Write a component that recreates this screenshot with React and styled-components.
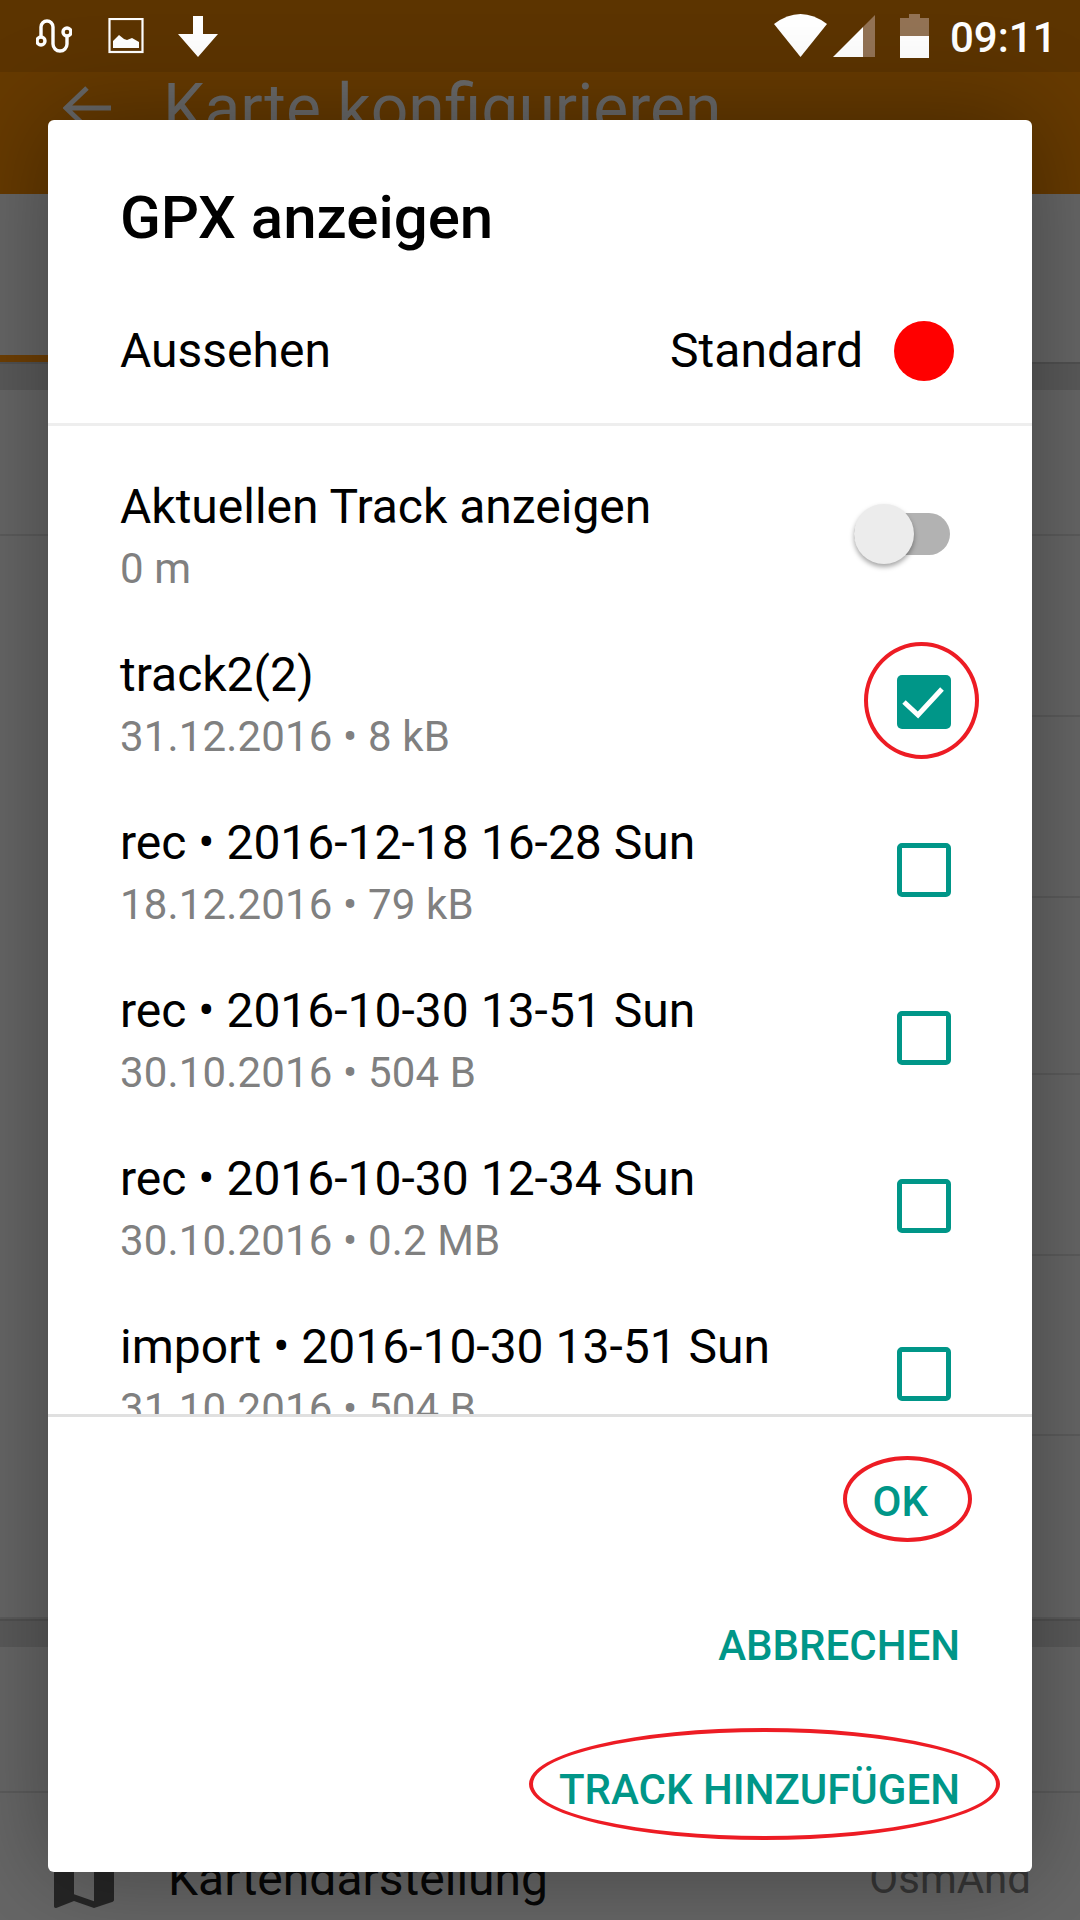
import React from "react";
import styled, { createGlobalStyle } from "styled-components";

const GlobalStyle = createGlobalStyle`
  html, body {
    margin: 0;
    padding: 0;
    background: #666;
    font-family: Roboto, "Liberation Sans", sans-serif;
  }
`;

const TEAL = "#009688";

const tracks = [
  { name: "track2(2)", meta: "31.12.2016 • 8 kB", checked: true },
  { name: "rec • 2016-12-18 16-28 Sun", meta: "18.12.2016 • 79 kB" },
  { name: "rec • 2016-10-30 13-51 Sun", meta: "30.10.2016 • 504 B" },
  { name: "rec • 2016-10-30 12-34 Sun", meta: "30.10.2016 • 0.2 MB" },
  { name: "import • 2016-10-30 13-51 Sun", meta: "31.10.2016 • 504 B" },
];

// heights of the rows behind the dialog, top to bottom
const backRows = [
  { height: 146, inset: 0 },
  { height: 181, inset: 160 },
  { height: 181, inset: 160 },
  { height: 177, inset: 160 },
  { height: 181, inset: 160 },
  { height: 180, inset: 160 },
  { height: 183, inset: 0 },
];

const App = () => {
  return (
    <Page>
      <GlobalStyle />
      <StatusBar>
        <StatusGroup>
          <svg width="36" height="36" viewBox="36 18 36 36" fill="none" stroke="#fff" strokeWidth="3.4">
            <path d="M41 37V27a6 6 0 0 1 12 0v17a7 7 0 0 0 14 0v-8" />
            <circle cx="41" cy="41" r="4" />
            <circle cx="67" cy="32" r="4" />
          </svg>
          <PictureIcon width="36" height="36" viewBox="108 18 36 36">
            <rect x="109.5" y="19" width="33" height="33" fill="none" stroke="#fff" strokeWidth="2.2" />
            <path d="M113 48v-7l6-6 5 4 3 1 5-2 7 4v6z" fill="#fff" />
          </PictureIcon>
          <ArrowIcon width="40" height="42" viewBox="178 16 40 42">
            <path d="M193 16h10v18h15l-20 23-20-23h15z" fill="#fff" />
          </ArrowIcon>
        </StatusGroup>
        <StatusGroup>
          <svg width="54" height="44" viewBox="773 14 54 44">
            <path d="M773 24q26.500-20 53 0l-26.500 33z" fill="#fff" />
          </svg>
          <SignalIcon width="42" height="43" viewBox="832 15 42 43">
            <path d="M862 27l12-12v42h-12z" fill="#937355" />
            <path d="M832 57l30-30v30z" fill="#fff" />
          </SignalIcon>
          <BatteryIcon width="29" height="44" viewBox="899 14 29 44">
            <path d="M899 18h9v-4h11v4h9v18h-29z" fill="#937355" />
            <rect x="899" y="36" width="29" height="22" fill="#fff" />
          </BatteryIcon>
          <Clock>09:11</Clock>
        </StatusGroup>
      </StatusBar>

      <AppBar>
        <svg width="48" height="44" viewBox="0 0 48 44" fill="none" stroke="#686868" strokeWidth="5">
          <path d="M2 22h46M24 2L3 22l21 20" />
        </svg>
        <AppBarTitle>Karte konfigurieren</AppBarTitle>
      </AppBar>

      <Backdrop>
        <TabStrip>
          <TabIndicator />
        </TabStrip>
        <SectionGap />
        {backRows.map((row, i) => (
          <BackRow key={i} $height={row.height} $inset={row.inset} />
        ))}
        <SectionGap />
        <BackRow $height={146} $inset={0} />
        <MapRow>
          <svg width="80" height="80" viewBox="0 0 24 24" fill="#262626">
            <path d="M20.5 3l-.16.03L15 5.100 9 3 3.360 4.900c-.21.07-.36.25-.36.48V20.500c0 .28.22.5.5.5l.16-.03L9 18.900l6 2.100 5.640-1.900c.21-.07.36-.25.36-.48V3.500c0-.28-.22-.5-.5-.5zM15 19l-6-2.110V5l6 2.110V19z" />
          </svg>
          <MapLabel>Kartendarstellung</MapLabel>
          <MapValue>OsmAnd</MapValue>
        </MapRow>
      </Backdrop>

      <Dialog>
        <DialogTitle>GPX anzeigen</DialogTitle>
        <AppearanceRow>
          <RowLabel>Aussehen</RowLabel>
          <AppearanceValue>
            <RowLabel>Standard</RowLabel>
            <ColorDot />
          </AppearanceValue>
        </AppearanceRow>
        <TrackList>
          <TrackRow>
            <TrackText>
              <RowLabel>Aktuellen Track anzeigen</RowLabel>
              <Meta>0 m</Meta>
            </TrackText>
            <Toggle>
              <ToggleThumb />
            </Toggle>
          </TrackRow>
          {tracks.map((track) => (
            <TrackRow key={track.name}>
              <TrackText>
                <RowLabel>{track.name}</RowLabel>
                <Meta>{track.meta}</Meta>
              </TrackText>
              <Checkbox $checked={track.checked}>
                {track.checked && (
                  <>
                    <svg width="54" height="54" viewBox="0 0 54 54" fill="none" stroke="#fff" strokeWidth="5">
                      <path d="M7 27l14 13 24-26" />
                    </svg>
                    <Mark $left={-33} $top={-33} $width={115} $height={117} />
                  </>
                )}
              </Checkbox>
            </TrackRow>
          ))}
        </TrackList>
        <Actions>
          <ActionButton $inset={32}>
            OK
            <Mark $left={-30} $top={-22} $width={129} $height={86} />
          </ActionButton>
          <ActionButton>ABBRECHEN</ActionButton>
          <ActionButton>
            TRACK HINZUFÜGEN
            <Mark $left={-30} $top={-38} $width={471} $height={112} />
          </ActionButton>
        </Actions>
      </Dialog>
    </Page>
  );
};

export default App;

const Page = styled.div`
  position: relative;
  width: 1080px;
  height: 1920px;
  overflow: hidden;
  display: flex;
  flex-direction: column;
  background: #666;
`;

const StatusBar = styled.div`
  height: 72px;
  flex: none;
  display: flex;
  justify-content: space-between;
  align-items: flex-start;
  padding: 0 20px 0 36px;
  background: #5c3400;
`;

const StatusGroup = styled.div`
  display: flex;
  align-items: flex-start;
  padding-top: 18px;

  svg {
    flex: none;
  }
  &:last-child {
    padding-top: 14px;
  }
`;

const PictureIcon = styled.svg`
  margin-left: 36px;
`;

const ArrowIcon = styled.svg`
  margin: -2px 0 0 34px;
`;

const SignalIcon = styled.svg`
  margin: 1px 0 0 5px;
`;

const BatteryIcon = styled.svg`
  margin-left: 25px;
`;

const Clock = styled.div`
  margin: 2px 0 0 21px;
  width: 110px;
  color: #fff;
  font-size: 42px;
  line-height: 44px;
  font-weight: 500;
`;

const AppBar = styled.div`
  height: 122px;
  flex: none;
  display: flex;
  align-items: flex-start;
  padding-left: 63px;
  background: #663a00;

  svg {
    margin-top: 14px;
  }
`;

const AppBarTitle = styled.div`
  margin: 0 0 0 52px;
  color: #6a6a6a;
  font-size: 66px;
  line-height: 74px;
  font-weight: 400;
  white-space: nowrap;
`;

const Backdrop = styled.div`
  flex: 1;
  display: flex;
  flex-direction: column;
`;

const TabStrip = styled.div`
  height: 168px;
  flex: none;
  display: flex;
  align-items: flex-end;
`;

const TabIndicator = styled.div`
  width: 360px;
  height: 7px;
  background: #6e3f04;
`;

const SectionGap = styled.div`
  height: 28px;
  flex: none;
  box-sizing: border-box;
  background: #5a5a5a;
  border-top: 2px solid #515151;
`;

const BackRow = styled.div`
  height: ${(p) => p.$height}px;
  flex: none;
  box-sizing: border-box;
  margin-left: ${(p) => p.$inset}px;
  border-bottom: 2px solid #5c5c5c;
`;

const MapRow = styled.div`
  height: 170px;
  flex: none;
  display: flex;
  align-items: center;
  padding: 0 49px 0 44px;
`;

const MapLabel = styled.div`
  margin-left: 44px;
  flex: 1;
  color: #060606;
  font-size: 48px;
`;

const MapValue = styled.div`
  color: #363636;
  font-size: 42px;
`;

const Dialog = styled.div`
  position: absolute;
  left: 48px;
  top: 120px;
  width: 984px;
  height: 1752px;
  display: flex;
  flex-direction: column;
  background: #fff;
  border-radius: 6px;
  box-shadow: 0 0 96px rgba(0, 0, 0, 0.35);
`;

const DialogTitle = styled.div`
  height: 156px;
  flex: none;
  box-sizing: border-box;
  padding: 62px 72px 0;
  color: #000;
  font-size: 60px;
  line-height: 72px;
  font-weight: 500;
`;

const AppearanceRow = styled.div`
  height: 150px;
  flex: none;
  box-sizing: border-box;
  display: flex;
  align-items: center;
  justify-content: space-between;
  padding: 3px 78px 0 72px;
  border-bottom: 3px solid #eeeeee;
`;

const AppearanceValue = styled.div`
  display: flex;
  align-items: center;
  gap: 31px;
`;

const RowLabel = styled.div`
  color: #000;
  font-size: 48px;
  line-height: 60px;
  white-space: nowrap;
`;

const ColorDot = styled.div`
  width: 60px;
  height: 60px;
  border-radius: 50%;
  background: #f00;
`;

const TrackList = styled.div`
  height: 988px;
  flex: none;
  box-sizing: border-box;
  padding-top: 24px;
  overflow: hidden;
`;

const TrackRow = styled.div`
  height: 168px;
  display: flex;
  align-items: center;
  justify-content: space-between;
  padding: 0 81px 0 72px;
`;

const TrackText = styled.div`
  display: flex;
  flex-direction: column;
  padding-top: 10px;
`;

const Meta = styled.div`
  color: #808080;
  font-size: 42px;
  line-height: 64px;
  letter-spacing: 0.15px;
  white-space: nowrap;
`;

const Toggle = styled.div`
  position: relative;
  width: 96px;
  height: 42px;
  margin-right: 1px;
  border-radius: 21px;
  background: #b2b2b2;
`;

const ToggleThumb = styled.div`
  position: absolute;
  left: 0;
  top: -9px;
  width: 60px;
  height: 60px;
  border-radius: 50%;
  background: #ececec;
  box-shadow: 0 3px 5px rgba(0, 0, 0, 0.35);
`;

const Checkbox = styled.div`
  position: relative;
  width: 54px;
  height: 54px;
  box-sizing: border-box;
  border: ${(p) => (p.$checked ? "none" : `5px solid ${TEAL}`)};
  border-radius: 5px;
  background: ${(p) => (p.$checked ? TEAL : "transparent")};
`;

// red hand-drawn rings laid over the screenshot
const Mark = styled.span`
  position: absolute;
  left: ${(p) => p.$left}px;
  top: ${(p) => p.$top}px;
  width: ${(p) => p.$width}px;
  height: ${(p) => p.$height}px;
  box-sizing: border-box;
  border: 4px solid #ed1c24;
  border-radius: 50%;
`;

const Actions = styled.div`
  flex: 1;
  display: flex;
  flex-direction: column;
  align-items: flex-end;
  padding: 61px 72px 0 0;
  border-top: 3px solid #e0e0e0;
  gap: 96px;
`;

const ActionButton = styled.div`
  position: relative;
  margin-right: ${(p) => p.$inset || 0}px;
  color: ${TEAL};
  font-size: 42px;
  line-height: 48px;
  font-weight: 500;
  white-space: nowrap;
`;
